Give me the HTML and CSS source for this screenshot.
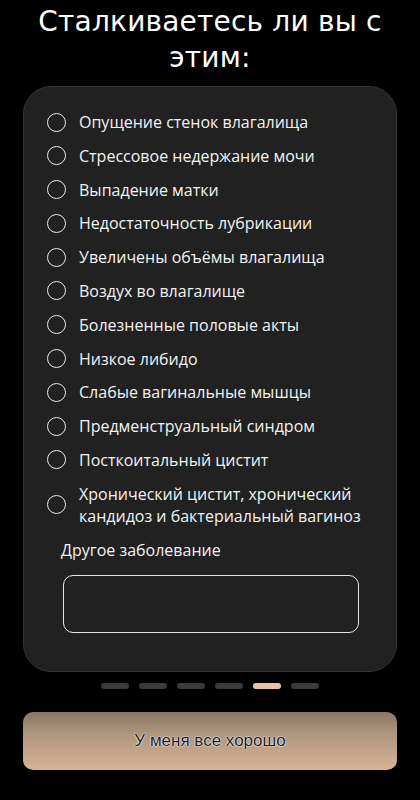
FILE: index.html
```html
<!DOCTYPE html>
<html lang="ru">
<head>
<meta charset="utf-8">
<title>Опрос</title>
<link rel="stylesheet" href="styles.css">
</head>
<body>
<div class="screen">
  <h1 class="title">Сталкиваетесь ли вы с<br>этим:</h1>
  <div class="card">
    <ul class="options">
      <li class="option"><span class="radio"></span><span class="label">Опущение стенок влагалища</span></li>
      <li class="option"><span class="radio"></span><span class="label">Стрессовое недержание мочи</span></li>
      <li class="option"><span class="radio"></span><span class="label">Выпадение матки</span></li>
      <li class="option"><span class="radio"></span><span class="label">Недостаточность лубрикации</span></li>
      <li class="option"><span class="radio"></span><span class="label">Увеличены объёмы влагалища</span></li>
      <li class="option"><span class="radio"></span><span class="label">Воздух во влагалище</span></li>
      <li class="option"><span class="radio"></span><span class="label">Болезненные половые акты</span></li>
      <li class="option"><span class="radio"></span><span class="label">Низкое либидо</span></li>
      <li class="option"><span class="radio"></span><span class="label">Слабые вагинальные мышцы</span></li>
      <li class="option"><span class="radio"></span><span class="label">Предменструальный синдром</span></li>
      <li class="option"><span class="radio"></span><span class="label">Посткоитальный цистит</span></li>
      <li class="option"><span class="radio"></span><span class="label">Хронический цистит, хронический<br>кандидоз и бактериальный вагиноз</span></li>
    </ul>
    <div class="other">
      <div class="other-label">Другое заболевание</div>
      <div class="other-input"></div>
    </div>
  </div>
  <div class="dots">
    <span class="dot"></span>
    <span class="dot"></span>
    <span class="dot"></span>
    <span class="dot"></span>
    <span class="dot active"></span>
    <span class="dot"></span>
  </div>
  <div class="button">У меня все хорошо</div>
</div>
</body>
</html>
```

FILE: styles.css
```css
html, body {
  margin: 0;
  padding: 0;
  background: #000;
}
.screen {
  width: 420px;
  height: 800px;
  display: flex;
  flex-direction: column;
  align-items: center;
  background: #000;
  color: #fff;
  font-family: "Open Sans", "Noto Sans", sans-serif;
}
.title {
  margin: 4px 0 0;
  font-family: "DejaVu Sans", sans-serif;
  font-weight: 400;
  font-size: 28px;
  line-height: 36px;
  text-align: center;
  color: #fff;
  letter-spacing: 0.2px;
}
.card {
  box-sizing: border-box;
  width: 374px;
  margin-top: 10px;
  height: 586px;
  background: #212121;
  border: 1px solid #353535;
  border-radius: 28px;
  padding: 24px 0 0 23px;
}
.options {
  list-style: none;
  margin: 0;
  padding: 0;
  display: flex;
  flex-direction: column;
  gap: 11.8px;
}
.option {
  display: flex;
  align-items: center;
  gap: 13px;
  font-size: 16px;
  line-height: 22px;
  color: #f2f2f2;
}
.radio {
  box-sizing: border-box;
  flex: none;
  width: 19px;
  height: 19px;
  border: 1.6px solid #e8e8e8;
  border-radius: 50%;
}
.other {
  padding: 12px 0 0 14px;
}
.other-label {
  font-size: 16px;
  line-height: 22px;
  color: #f2f2f2;
}
.other-input {
  box-sizing: border-box;
  width: 296px;
  height: 58px;
  margin: 14px 0 0 2px;
  border: 1.5px solid #e6e6e6;
  border-radius: 10px;
}
.dots {
  display: flex;
  gap: 10px;
  margin-top: 11px;
}
.dot {
  width: 28px;
  height: 6px;
  border-radius: 3px;
  background: #3a3a3a;
}
.dot.active {
  background: #e6c2a6;
}
.button {
  box-sizing: border-box;
  width: 374px;
  height: 58px;
  margin-top: 23px;
  border-radius: 10px;
  background: linear-gradient(180deg, #8a7664 0%, #b09780 40%, #d6b394 100%);
  display: flex;
  align-items: center;
  justify-content: center;
  font-family: "Liberation Sans", Arial, sans-serif;
  font-size: 17px;
  color: #1c1c1c;
  text-shadow: 0 0 1px #fff, 0 0 1px #fff, 0 0 2px rgba(255,255,255,0.7);
}
```
